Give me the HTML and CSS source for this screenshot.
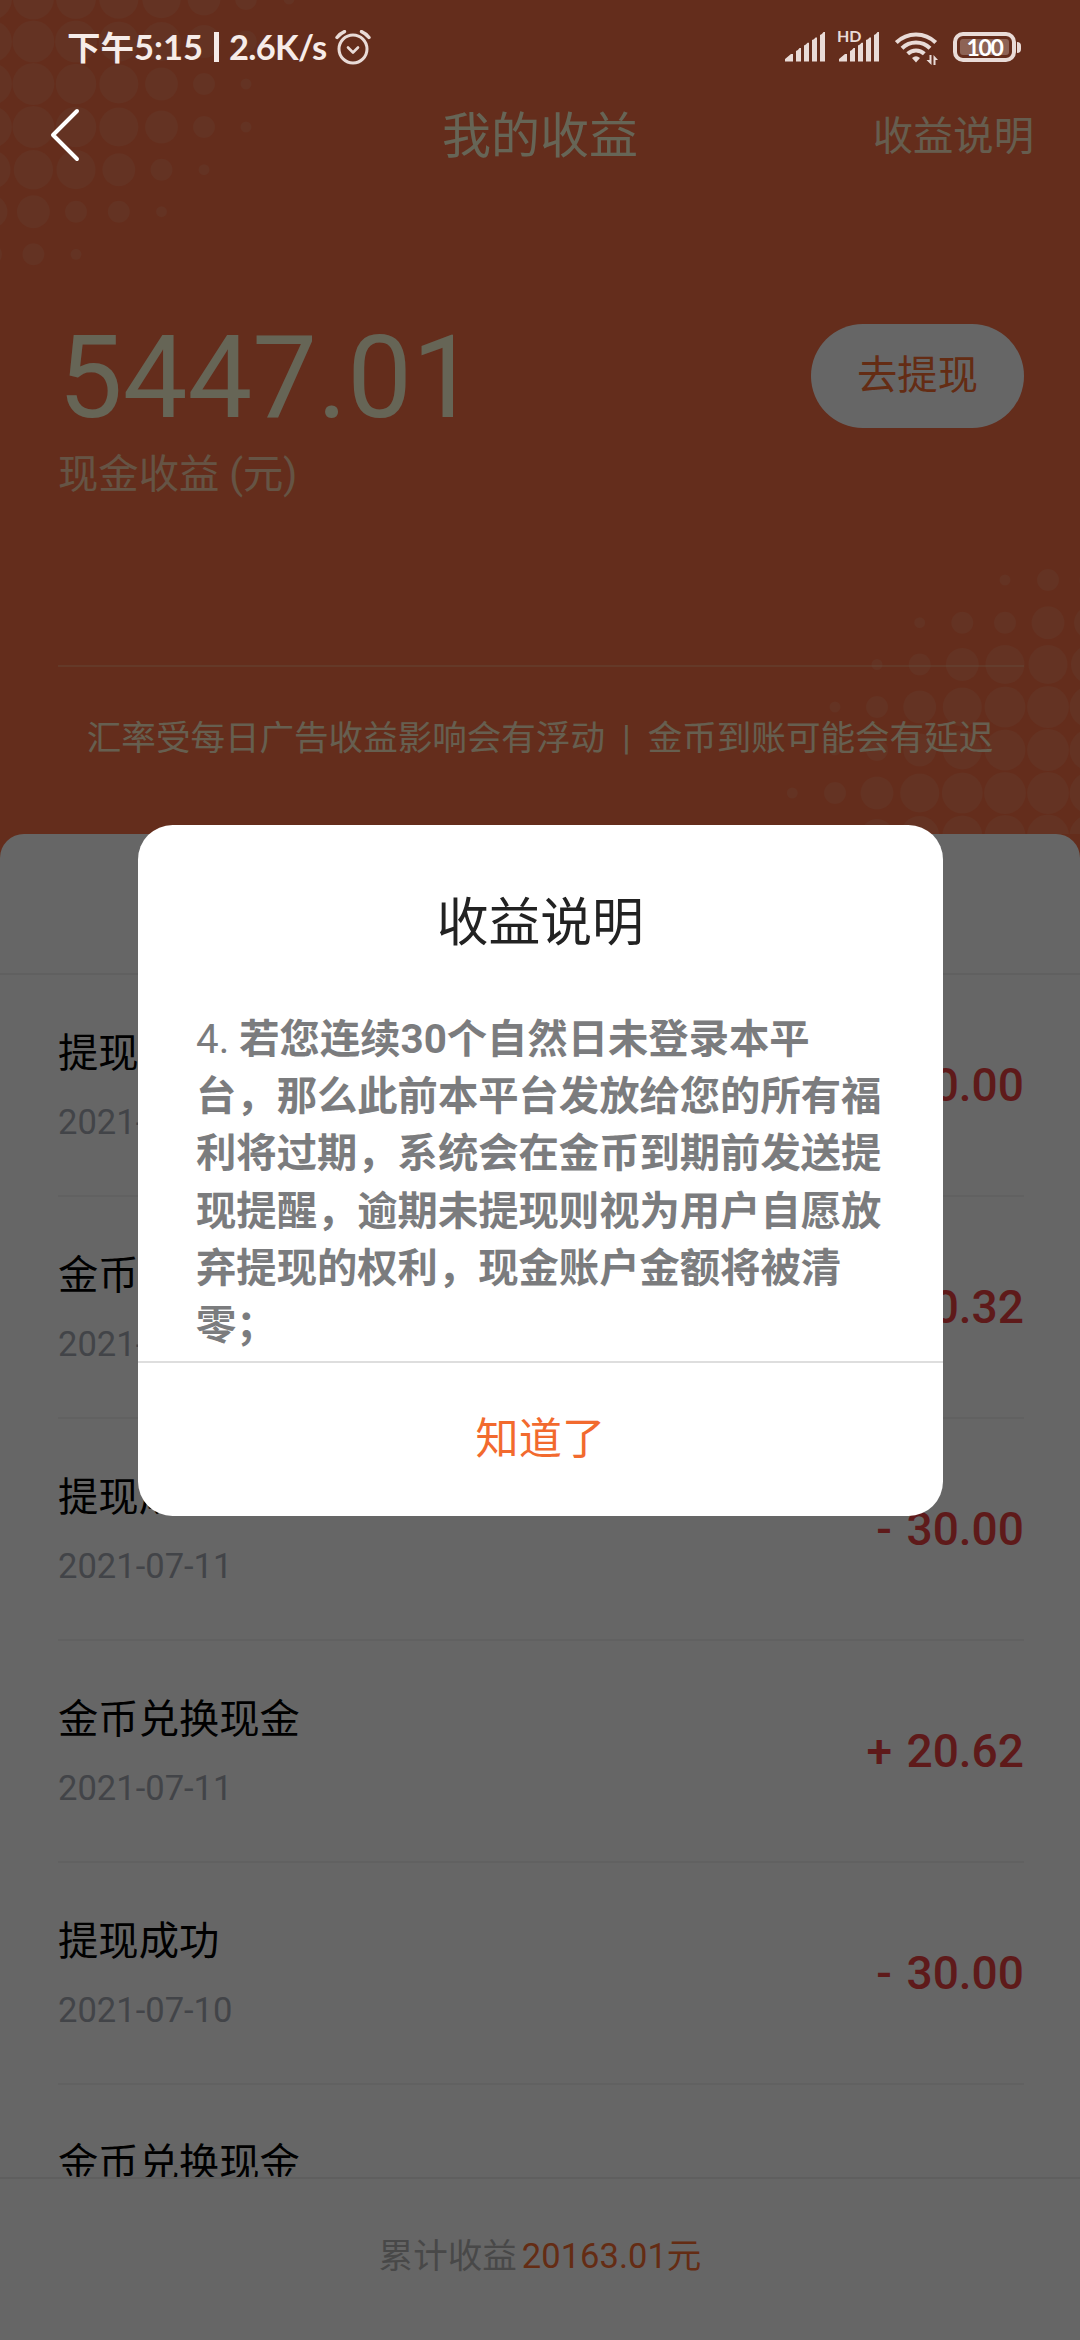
FILE: index.html
```
<!DOCTYPE html>
<html lang="zh-CN">
<head>
<meta charset="utf-8">
<title>我的收益</title>
<link rel="stylesheet" href="styles.css">
</head>
<body>
<div class="app">
  <header class="hero">
    <svg class="dots" width="1080" height="834" viewBox="0 0 1080 834" aria-hidden="true">
      <g>
        <circle cx="-9" cy="-1" r="21"/><circle cx="33.4" cy="-1" r="20.5"/><circle cx="76" cy="-1" r="20"/><circle cx="118.8" cy="-1" r="19.7"/><circle cx="161.5" cy="-1" r="19.3"/><circle cx="204" cy="-1" r="16.5"/><circle cx="246" cy="-1" r="11"/><circle cx="289" cy="-1" r="5.5"/>
        <circle cx="-9" cy="41.5" r="21"/><circle cx="33.4" cy="41.5" r="21"/><circle cx="76" cy="41.5" r="21"/><circle cx="118.8" cy="41.5" r="20"/><circle cx="161.5" cy="41.5" r="19.5"/><circle cx="204" cy="41.5" r="16.5"/><circle cx="246" cy="41.5" r="11"/>
        <circle cx="-9" cy="84" r="21"/><circle cx="33.4" cy="84" r="21"/><circle cx="76" cy="84" r="20.3"/><circle cx="118.8" cy="84" r="19.6"/><circle cx="161.5" cy="84" r="16.5"/><circle cx="204" cy="84" r="11"/><circle cx="246" cy="84" r="5.5"/>
        <circle cx="-9" cy="127" r="21"/><circle cx="33.4" cy="127" r="21"/><circle cx="76" cy="127" r="20.3"/><circle cx="118.8" cy="127" r="19.6"/><circle cx="161.5" cy="127" r="16.5"/><circle cx="204" cy="127" r="11"/><circle cx="246" cy="127" r="5.5"/>
        <circle cx="-9" cy="169.7" r="19.6"/><circle cx="33.4" cy="169.7" r="19.7"/><circle cx="76" cy="169.7" r="19.6"/><circle cx="118.8" cy="169.7" r="16.5"/><circle cx="161.5" cy="169.7" r="11"/><circle cx="204" cy="169.7" r="5.5"/>
        <circle cx="-9" cy="211.7" r="16.5"/><circle cx="33.4" cy="211.7" r="16.5"/><circle cx="76" cy="211.7" r="11"/><circle cx="118.8" cy="211.7" r="11"/><circle cx="161.5" cy="211.7" r="5.5"/>
        <circle cx="-9" cy="254.3" r="11"/><circle cx="33.4" cy="254.3" r="11"/><circle cx="76" cy="254.3" r="5.5"/>
      </g>
      <g>
        <circle cx="1005" cy="580" r="5.5"/><circle cx="1048" cy="580" r="11"/><circle cx="1090.5" cy="580" r="11"/>
        <circle cx="919.7" cy="622.7" r="5.5"/><circle cx="962.3" cy="622.7" r="11"/><circle cx="1005" cy="622.7" r="11"/><circle cx="1048" cy="622.7" r="16.5"/><circle cx="1090.5" cy="622.7" r="16.5"/>
        <circle cx="877" cy="664.5" r="5.5"/><circle cx="919.7" cy="664.5" r="11"/><circle cx="962.3" cy="664.5" r="16.5"/><circle cx="1005" cy="664.5" r="19.6"/><circle cx="1048" cy="664.5" r="19.6"/><circle cx="1090.5" cy="664.5" r="19.6"/>
        <circle cx="835" cy="707" r="5.5"/><circle cx="877" cy="707" r="11"/><circle cx="919.7" cy="707" r="16.5"/><circle cx="962.3" cy="707" r="19.6"/><circle cx="1005" cy="707" r="20.5"/><circle cx="1048" cy="707" r="21"/><circle cx="1090.5" cy="707" r="21"/>
        <circle cx="835" cy="750" r="5.5"/><circle cx="877" cy="750" r="11"/><circle cx="919.7" cy="750" r="16.5"/><circle cx="962.3" cy="750" r="19.6"/><circle cx="1005" cy="750" r="20.5"/><circle cx="1048" cy="750" r="21"/><circle cx="1090.5" cy="750" r="21"/>
        <circle cx="792.3" cy="793" r="5.5"/><circle cx="835" cy="793" r="11"/><circle cx="877" cy="793" r="16.5"/><circle cx="919.7" cy="793" r="19.6"/><circle cx="962.3" cy="793" r="20.5"/><circle cx="1005" cy="793" r="21"/><circle cx="1048" cy="793" r="21"/><circle cx="1090.5" cy="793" r="21"/>
        <circle cx="877" cy="835.5" r="16.5"/><circle cx="919.7" cy="835.5" r="19.6"/><circle cx="962.3" cy="835.5" r="20"/><circle cx="1005" cy="835.5" r="20.5"/><circle cx="1048" cy="835.5" r="21"/><circle cx="1090.5" cy="835.5" r="21"/>
      </g>
    </svg>
    <nav class="nav">
      <span></span>
      <h1 class="nav-title">我的收益</h1>
      <a class="nav-link">收益说明</a>
    </nav>
    <section class="balance">
      <div>
        <div class="balance-value">5447.01</div>
        <div class="balance-label">现金收益 (元)</div>
      </div>
      <button class="withdraw">去提现</button>
    </section>
    <p class="notice">汇率受每日广告收益影响会有浮动&nbsp; |&nbsp; 金币到账可能会有延迟</p>
  </header>
  <main class="sheet">
    <div class="sheet-head"></div>
    <ul class="records">
      <li class="record"><div><div class="record-name">提现成功</div><div class="record-date">2021-07-12</div></div><div class="record-amount">- 30.00</div></li>
      <li class="record"><div><div class="record-name">金币兑换现金</div><div class="record-date">2021-07-12</div></div><div class="record-amount">+ 30.32</div></li>
      <li class="record"><div><div class="record-name">提现成功</div><div class="record-date">2021-07-11</div></div><div class="record-amount">- 30.00</div></li>
      <li class="record"><div><div class="record-name">金币兑换现金</div><div class="record-date">2021-07-11</div></div><div class="record-amount">+ 20.62</div></li>
      <li class="record"><div><div class="record-name">提现成功</div><div class="record-date">2021-07-10</div></div><div class="record-amount">- 30.00</div></li>
      <li class="record"><div><div class="record-name">金币兑换现金</div></div></li>
    </ul>
  </main>
  <footer class="total"><span class="total-label">累计收益</span><span class="total-value">20163.01元</span></footer>
</div>

<div class="mask">
  <div class="dialog">
    <h2 class="dialog-title">收益说明</h2>
    <p class="dialog-text">4. <b>若您连续30个自然日未登录本平台，那么此前本平台发放给您的所有福利将过期，系统会在金币到期前发送提现提醒，逾期未提现则视为用户自愿放弃提现的权利，现金账户金额将被清零；</b></p>
    <button class="dialog-ok">知道了</button>
  </div>
</div>

<div class="system">
  <div class="status">
    <div class="status-left">
      <span class="clock"><span class="clock-cn">下午</span>5:15<i class="bar"></i><span class="speed">2.6K/s</span></span>
      <svg class="alarm" width="36" height="36" viewBox="0 0 36 36" fill="none" stroke="currentColor" stroke-width="3" stroke-linecap="round"><circle cx="18" cy="19" r="14"/><path d="M13 17.5l5 5 5-5" stroke-width="2.6" stroke-linejoin="round"/><path d="M2 7.5Q5 3.5 9.500 1.600M34 7.500Q31 3.500 26.500 1.600" stroke-width="3.400"/></svg>
    </div>
    <div class="status-right">
      <svg class="signal" width="40" height="30" viewBox="0 0 40 30" fill="currentColor"><path d="M0 29.500V27L6 22H8V29.500ZM11 19Q13 18.500 14.500 16H16V29.500H11ZM19 13.500Q21 13 22.500 10.700H24V29.500H19ZM27 8Q29 7.500 30.500 5.400H32V29.500H27ZM35 3Q37 2.500 38.500 0H40V29.500H35Z"/></svg>
      <div class="signal-hd">
        <svg class="signal" width="40" height="30" viewBox="0 0 40 30" fill="currentColor"><path d="M0 29.500V27L6 22H8V29.500ZM11 19Q13 18.500 14.500 16H16V29.500H11ZM19 13.500Q21 13 22.500 10.700H24V29.500H19ZM27 8Q29 7.500 30.500 5.400H32V29.500H27ZM35 3Q37 2.500 38.500 0H40V29.500H35Z"/></svg>
        <span class="hd">HD</span>
      </div>
      <svg class="wifi" width="43" height="33" viewBox="0 0 43 33"><g fill="none" stroke="currentColor" stroke-width="4"><path d="M1.300 10.500A28 28 0 0 1 40.700 10.500"/><path d="M7 16.300A20 20 0 0 1 35 16.300"/><path d="M12.700 21.800A12 12 0 0 1 29.300 21.800"/></g><path fill="currentColor" d="M17 26Q21 22.500 25 26L21 30.500Z"/><path fill="currentColor" d="M36.500 23V33L31.500 28H34.500V23ZM38.500 33V23L43 28H40.500V33Z"/></svg>
      <div class="battery"><div class="battery-case"><span class="battery-level">100</span></div><i class="battery-cap"></i></div>
    </div>
  </div>
  <svg class="back" width="34" height="56" viewBox="0 0 34 56" fill="none" stroke="#fff" stroke-width="4" stroke-linecap="round" stroke-linejoin="round"><path d="M28 4L4 28L28 52"/></svg>
</div>
</body>
</html>
```
FILE: styles.css
```
* { box-sizing: border-box; margin: 0; padding: 0; }

body {
  width: 1080px;
  height: 2340px;
  overflow: hidden;
  position: relative;
  background: #fa7046;
  font-family: Roboto, "Noto Sans CJK SC", sans-serif;
}

button { border: 0; background: none; font: inherit; }

.app {
  height: 2340px;
  display: flex;
  flex-direction: column;
}

/* Orange header */
.hero {
  position: relative;
  flex: none;
  height: 834px;
  padding-top: 89px;
  color: #fffcd8;
}
.dots { position: absolute; left: 0; top: 0; fill: #fa7f57; }

.nav {
  position: relative;
  height: 96px;
  padding: 0 46px;
  display: grid;
  grid-template-columns: 1fr auto 1fr;
  align-items: center;
}
.nav-title { font-size: 48.96px; font-weight: 400; line-height: 96px; }
.nav-link { justify-self: end; font-size: 40.32px; line-height: 96px; color: #fff0cc; opacity: .95; }

.balance {
  position: relative;
  height: 482px;
  margin: 0 56px 0 58px;
  border-bottom: 2px solid rgba(255, 252, 216, .22);
  padding-top: 127px;
  display: flex;
  justify-content: space-between;
  align-items: flex-start;
}
.balance-value { font-size: 115.2px; line-height: 132px; }
.balance-label { font-size: 40.32px; line-height: 60px; margin-top: 1px; opacity: .7; }
.withdraw {
  width: 213px;
  height: 104px;
  margin-top: 12px;
  border-radius: 52px;
  background: #fff;
  color: #fa6e32;
  font-size: 40.32px;
  line-height: 100px;
}
.notice {
  position: relative;
  padding-top: 41px;
  text-align: center;
  font-size: 34.56px;
  line-height: 60px;
  white-space: nowrap;
  opacity: .9;
}

/* Record list */
.sheet {
  flex: none;
  height: 1343px;
  overflow: hidden;
  border-radius: 24px 24px 0 0;
  background: #fff;
}
.sheet-head { height: 141px; border-bottom: 2px solid #f0f0f0; }
.records { list-style: none; padding: 0 56px 0 58px; }
.record {
  height: 222px;
  padding-top: 49px;
  border-bottom: 2px solid #f2f2f2;
  display: flex;
  justify-content: space-between;
}
.record-name { font-size: 40.32px; line-height: 60px; color: #000; }
.record-date { margin-top: 13px; font-size: 34.56px; line-height: 50px; color: #a6aab4; }
.record-amount { padding-top: 1px; font-size: 46.08px; line-height: 120px; font-weight: 500; color: #ec4343; white-space: pre; word-spacing: 3px; }

.total {
  flex: 1;
  border-top: 2px solid #eee;
  background: #fff;
  display: flex;
  justify-content: center;
  gap: 5px;
  padding-top: 47px;
  font-size: 34.56px;
  line-height: 60px;
}
.total-label { color: #b4b4b4; }
.total-value { color: #fa6e32; }

/* Dialog */
.mask {
  position: absolute;
  inset: 0;
  padding-top: 825px;
  background: rgba(0, 0, 0, .6);
}
.dialog {
  width: 804.6px;
  height: 691px;
  margin-left: 138px;
  border-radius: 34.56px;
  background: #fff;
  display: flex;
  flex-direction: column;
  overflow: hidden;
}
.dialog-title { padding-top: 59px; height: 185px; text-align: center; font-size: 51.84px; line-height: 80px; font-weight: 400; color: #222; }
.dialog-text { flex: 1; padding: 1px 58px 0; font-size: 40.32px; line-height: 57.2px; color: #7b7c7e; }
.dialog-text b { font-weight: 700; }
.dialog-ok { height: 155px; border-top: 2px solid #dedede; padding-bottom: 10px; font-size: 43.2px; color: #f26a2e; }

/* System bar and back key, above the mask */
.system { position: absolute; left: 0; top: 0; width: 1080px; color: #e9dbd7; }
.status { height: 94px; padding: 0 59px 0 67px; display: flex; justify-content: space-between; }
.status-left { display: flex; align-items: flex-start; }
.clock {
  width: 268px;
  margin-top: 23px;
  display: flex;
  align-items: center;
  font-family: Lato, "Noto Sans CJK SC", sans-serif;
  font-size: 34.5px;
  line-height: 48px;
  font-weight: 700;
  color: #f6ece9;
  white-space: nowrap;
}
.clock-cn { font-size: 33.5px; line-height: 48px; }
.speed { letter-spacing: -.7px; }
.bar { width: 5px; height: 30px; margin: 0 10px 0 11px; background: currentColor; }
.alarm { margin-top: 30px; }
.status-right { display: flex; align-items: flex-start; padding-top: 32px; }
.signal { display: block; }
.signal-hd { position: relative; margin-left: 14px; }
.hd {
  position: absolute; left: -2px; top: -4px;
  width: 23px; height: 15px;
  background: #642d1c;
  font: 700 16px/15px Lato, sans-serif;
}
.wifi { margin-left: 16px; }
.battery { display: flex; align-items: center; margin-left: 15px; }
.battery-case { width: 63px; height: 30px; border: 4px solid currentColor; border-radius: 10px; padding: 3px; }
.battery-level {
  display: block; height: 16px; border-radius: 3px;
  background: #8d6355; color: #fff; text-align: center;
  font: 700 23px/16px Lato, sans-serif;
  letter-spacing: -1.3px;
}
.battery-cap { width: 4px; height: 11px; margin-left: 1px; border-radius: 0 4px 4px 0; background: currentColor; }
.back { display: block; margin: 13px 0 0 49px; }
```
